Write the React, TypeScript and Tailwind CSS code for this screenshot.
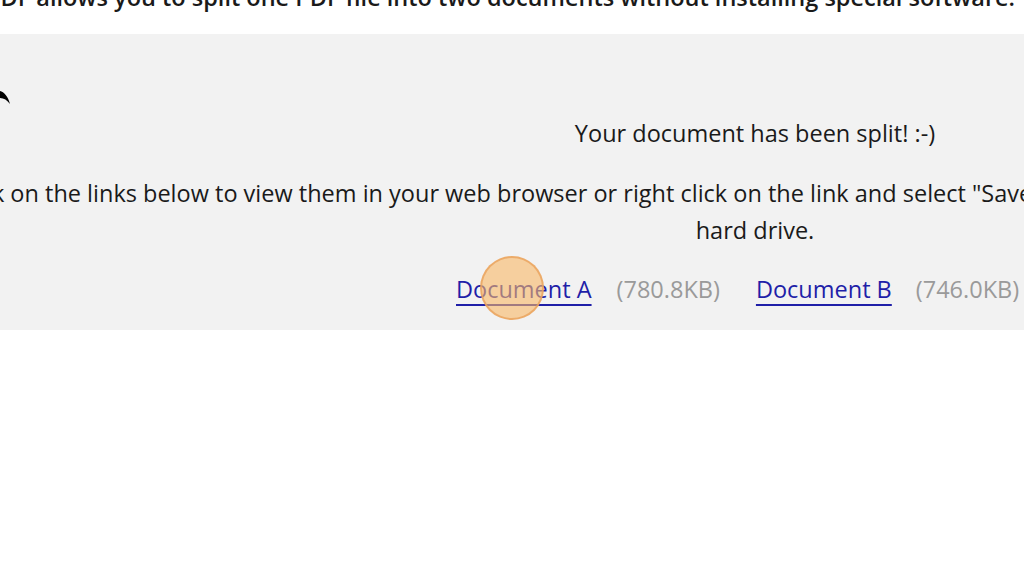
import React from "react";

export default function App() {
  return (
    <div className="w-[1024px] h-[576px] overflow-hidden bg-white relative font-['Open_Sans',_'Noto_Sans',_sans-serif]">
      <div className="h-[34px] overflow-hidden">
        <div className="whitespace-nowrap text-[23.5px] leading-[28px] font-semibold text-[#1a1a1a] mt-[-17px] ml-[-14px]">
          PDF allows you to split one PDF file into two documents without installing special software.
        </div>
      </div>
      <div className="bg-[#f2f2f2] h-[296px] relative overflow-hidden">
        <svg className="absolute left-0 top-[52px]" width="14" height="30" viewBox="0 0 14 30">
          <path d="M0 5 C4 6 8 10 10 18 C7 14 4 12 0 12 Z" fill="#000" />
        </svg>
        <div className="w-[1510px] flex flex-col items-center pt-[85px] text-[23.5px] text-[#1a1a1a]">
          <div className="leading-[28px] whitespace-nowrap">Your document has been split! :-)</div>
          <div className="self-start ml-[-46px] mt-[28px] leading-[37px] whitespace-nowrap">
            Click on the links below to view them in your web browser or right click on the link and select "Save Target As..." to save them to your
          </div>
          <div className="leading-[37px] whitespace-nowrap">hard drive.</div>
        </div>
        <div className="flex items-center ml-[456px] mt-[25px] text-[23.5px] leading-[30px] whitespace-nowrap">
          <a href="#" className="text-[#1f1fa8] underline decoration-2 underline-offset-[6px]">Document A</a>
          <span className="ml-[25px] text-[#9a9a9a]">(780.8KB)</span>
          <a href="#" className="ml-[36px] text-[#1f1fa8] underline decoration-2 underline-offset-[6px]">Document B</a>
          <span className="ml-[24px] text-[#9a9a9a]">(746.0KB)</span>
        </div>
      </div>
      <div className="absolute left-[480px] top-[256px] w-[64px] h-[64px] rounded-full bg-[#f9b865]/60 border-2 border-[#eaa35c]/80" />
    </div>
  );
}
